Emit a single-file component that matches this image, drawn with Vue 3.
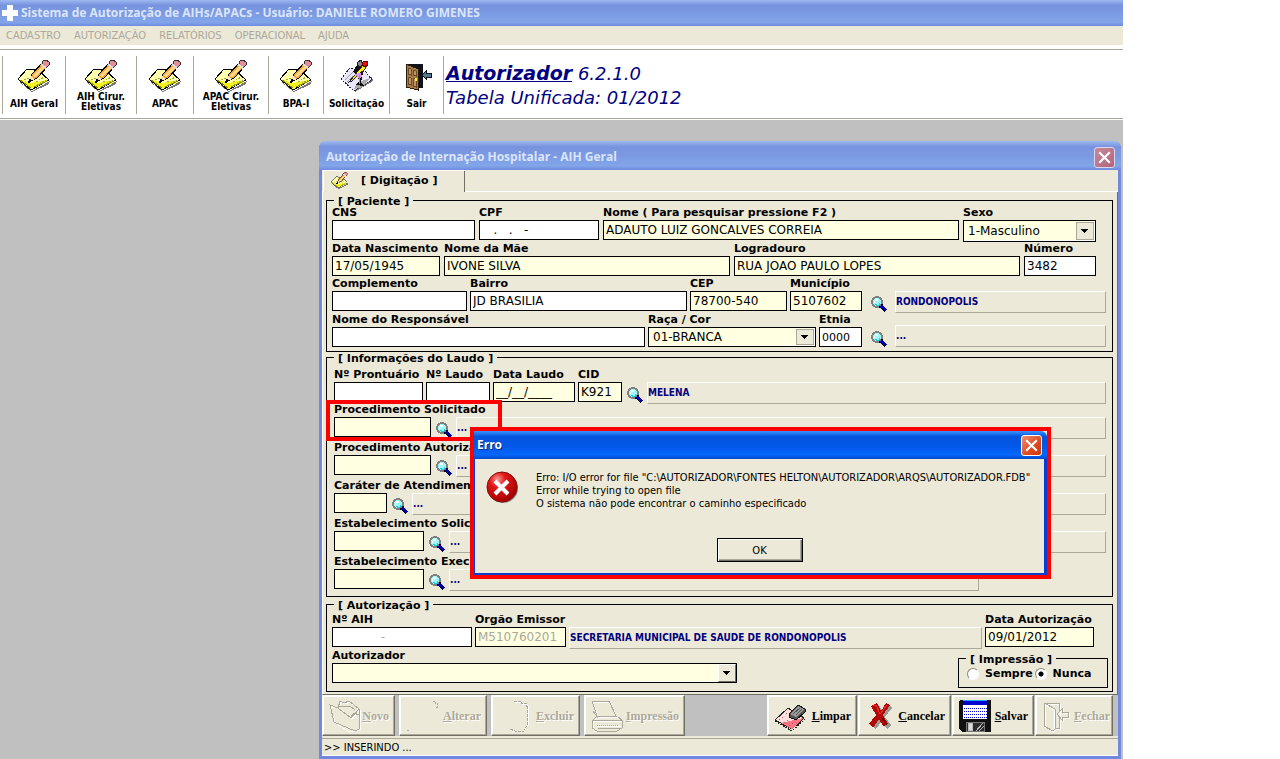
<script setup>
import { ref } from 'vue'

const menus = ['CADASTRO', 'AUTORIZAÇÃO', 'RELATÓRIOS', 'OPERACIONAL', 'AJUDA']
const tools = [
  { label: 'AIH Geral', icon: 'note', size: 'w63' },
  { label: 'AIH Cirur. Eletivas', icon: 'note', size: 'w71', two: true },
  { label: 'APAC', icon: 'note', size: 'w57' },
  { label: 'APAC Cirur. Eletivas', icon: 'note', size: 'w75', two: true },
  { label: 'BPA-I', icon: 'note', size: 'w55' },
  { label: 'Solicitação', icon: 'request', size: 'w66' },
  { label: 'Sair', icon: 'door', size: 'w54' }
]
const lookups = [
  { id: 'proc-sol', label: 'Procedimento Solicitado', size: 'code-l', marked: true },
  { id: 'proc-aut', label: 'Procedimento Autorizado', size: 'code-l' },
  { id: 'carater', label: 'Caráter de Atendimento', size: 'code-s' },
  { id: 'est-sol', label: 'Estabelecimento Solicitante', size: 'code-m' },
  { id: 'est-exe', label: 'Estabelecimento Executante', size: 'code-m', short: true }
]
const leftActions = [
  { key: 'N', rest: 'ovo', icon: 'folder', size: 'w73' },
  { key: 'A', rest: 'lterar', icon: 'edit', size: 'w88' },
  { key: 'E', rest: 'xcluir', icon: 'trash', size: 'w89' },
  { key: 'I', rest: 'mpressão', icon: 'printer', size: 'w101' }
]
const rightActions = [
  { key: 'L', rest: 'impar', icon: 'eraser', size: 'w90' },
  { key: 'C', rest: 'ancelar', icon: 'cancel', size: 'w93' },
  { key: 'S', rest: 'alvar', icon: 'disk', size: 'w82' },
  { key: 'F', rest: 'echar', icon: 'exit', size: 'w78', off: true }
]
const printMode = ref('nunca')
const cpf = '\u00a0\u00a0\u00a0.\u00a0\u00a0\u00a0.\u00a0\u00a0\u00a0-'
const aih = '\u00a0'.repeat(12) + '-'
</script>

<template>
  <div class="page">
    <svg class="defs" aria-hidden="true">
      <symbol id="note" viewBox="0 0 32 32">
        <g shape-rendering="crispEdges">
          <path d="M2 22 L14 31 L32 21 L31 24 L14 32 L1 22Z" fill="#777" />
          <path d="M0 19 L9 9 L20 10 L31 20 L13 30Z" fill="#ffffb0" stroke="#000" />
          <path d="M3 20 L13 23 L29 20 L29 22 L13 29Z" fill="#f2f21c" />
          <path d="M2 20 L13 28 M16 27 L29 21" stroke="#84840a" fill="none" />
          <path d="M6 20 L11 18 M18 22 L26 17 M19 25 L28 20" stroke="#a9a92e" fill="none" stroke-dasharray="2 1" />
          <path d="M11 22 L14 14 L25 2 L30 6 L19 18Z" fill="#f9a23a" stroke="#000" />
          <path d="M15 16 L25 5 L27 7 L17 18Z" fill="#ffd98a" />
          <path d="M25 1 L28 0 L31 2 L31 5 L28 8 L24 4Z" fill="#e58c96" stroke="#333" />
          <path d="M23 4 L28 8" stroke="#ddd" stroke-width="2" />
          <path d="M11 22 L13 16 L17 19Z" fill="#f7e3bd" />
          <path d="M10 23 L13 20" stroke="#000" stroke-width="2" />
        </g>
      </symbol>
      <symbol id="request" viewBox="0 0 32 32">
        <g shape-rendering="crispEdges">
          <path d="M3 21 L14 32 L32 21 L31 17Z" fill="#777" />
          <path d="M0 19 L9 8 L25 12 L31 20 L13 31Z" fill="#e8e8fa" stroke="#223" stroke-dasharray="2 1" />
          <path d="M16 23 L29 18 L22 27 L13 29Z" fill="#aaa" />
          <path d="M4 20 L12 12 M6 22 L14 15" stroke="#99a" />
          <path d="M15 6 L20 4 L22 13 L20 23 L23 26 L15 25 L18 21 L16 14 L12 12Z" fill="#111" />
          <path d="M8 22 L22 5 L25 8 L11 21Z" fill="#ffea20" stroke="#222" />
          <path d="M13 14 L20 13 L21 17 L18 18Z" fill="#d898dc" />
          <path d="M16 3 L20 0 L22 5 L18 7Z" fill="#888" stroke="#222" />
          <path d="M22 2 L26 1 L27 5 L24 7 L21 5Z" fill="#e31313" stroke="#600" />
          <path d="M18 15 V24" stroke="#999" />
        </g>
      </symbol>
      <symbol id="door" viewBox="0 0 32 32">
        <g shape-rendering="crispEdges">
          <path d="M5 4 H22 V28 H17 V9Z" fill="#10121c" />
          <path d="M5 4 L17 9 V30 L5 27Z" fill="#a57a48" stroke="#2c1c0c" />
          <path d="M7 8 L10 9 V15 L7 14Z M12 10 L15 11 V16 L12 15Z M7 17 L10 18 V25 L7 24Z M12 18 L15 19 V27 L12 26Z" fill="#bd9365" stroke="#6d4a25" />
          <path d="M14 18 h2 v3 h-2Z" fill="#ffea00" />
          <path d="M21 15 L25 11 V13 H30 V17 H25 V19Z" fill="#56788c" stroke="#10121c" />
        </g>
      </symbol>
      <symbol id="lens" viewBox="0 0 16 16">
        <g shape-rendering="crispEdges">
          <circle cx="6" cy="6" r="5" fill="#9ff6fb" stroke="#808080" stroke-width="2" />
          <path d="M4 3 h3 v2 h-3Z M3 5 h1 v2 h-1Z" fill="#fff" />
          <path d="M4 8 h2 v1 h2 v-2 h1 v2 h-1 v1 h-3Z" fill="#17cddd" />
          <path d="M8 11 L10 11 L11 8 L11 10Z" fill="#000" stroke="#000" />
          <path d="M10 10 L15 15" stroke="#0000a8" stroke-width="3" />
          <path d="M10 12 L14 16" stroke="#000" />
        </g>
      </symbol>
      <symbol id="folder" viewBox="0 0 32 32">
        <g fill="none" shape-rendering="crispEdges">
          <path d="M1 7 L9 6 L11 1 L15 3 L20 1 L30 9 V26 L30 29 L20 31 L5 22Z M9 7 L22 18 L30 9 M22 17 L25 12 L30 15" stroke="#fff" transform="translate(1 1)" />
          <path d="M1 5 L9 8 L11 1 L15 3 L20 1 L30 9 V29 L26 31 L5 22Z M9 8 L22 18 L30 9 M9 6 L21 6 L26 10 M22 17 L25 13 L30 15" stroke="#aca899" />
        </g>
      </symbol>
      <symbol id="edit" viewBox="0 0 32 32">
        <path d="M27 1 h2 v2 h2 v4 h-1 M1 30 h3" fill="none" stroke="#aca899" shape-rendering="crispEdges" stroke-dasharray="2 1" />
      </symbol>
      <symbol id="trash" viewBox="0 0 32 32">
        <g fill="none" shape-rendering="crispEdges">
          <path d="M17 2 h7 v2 h5 v5 M30 6 V25 L27 30 M12 30 L17 32 H26" stroke="#fff" />
          <path d="M16 1 h7 v2 h5 v4 M29 6 V25 L26 30 M12 29 L17 31 H26" stroke="#aca899" stroke-dasharray="3 1" />
        </g>
      </symbol>
      <symbol id="printer" viewBox="0 0 32 32">
        <g fill="none" shape-rendering="crispEdges">
          <path d="M1 1 H18 L25 16 H6Z M6 16 L1 21 V28 L6 31 H31 V20 L27 17 M1 20 H31 M5 25 H29 M2 11 L7 18" stroke="#fff" transform="translate(1 1)" />
          <path d="M1 1 H18 L25 16 H6Z M6 16 L1 21 V28 L6 31 H26 L31 28 V20 L27 17 M1 20 H31 M2 11 L7 18 M7 28 H30" stroke="#aca899" />
          <path d="M6 25 H28" stroke="#aca899" stroke-dasharray="1 1" />
        </g>
      </symbol>
      <symbol id="eraser" viewBox="0 0 32 32">
        <g shape-rendering="crispEdges">
          <path d="M1 20 L14 8 L30 18 L18 29Z" fill="#ffdede" stroke="#222" />
          <path d="M7 23 L29 18 L18 29Z" fill="#ff7480" />
          <path d="M1 21 L18 31 L31 19" stroke="#222" stroke-dasharray="2 1" fill="none" />
          <path d="M8 17 L19 24 M12 13 L22 20 M5 19 L16 26" stroke="#965" stroke-dasharray="1 2" />
          <path d="M15 14 L24 5 L31 9 V12 L22 20 L15 17Z" fill="#555" stroke="#111" />
          <path d="M16 14 L24 6 L30 9 L22 17Z" fill="#999" />
          <path d="M19 14 L26 8 M22 15 L28 9" stroke="#555" />
        </g>
      </symbol>
      <symbol id="cancel" viewBox="0 0 32 32">
        <g shape-rendering="crispEdges">
          <path d="M9 8 L14 5 L18 12 L24 5 L27 8 L20 17 L26 25 L22 29 L17 21 L11 29 L7 26 L14 17Z" fill="#9b9a94" />
          <path d="M6 6 L12 3 L16 11 L21 3 L25 5 L18 15 L23 24 L18 26 L14 19 L8 28 L4 24 L11 15Z" fill="#b20808" />
          <path d="M8 6 L11 5 L15 14 L22 5" stroke="#e83030" fill="none" />
          <path d="M16 17 L22 24 L18 26" stroke="#600000" fill="none" />
        </g>
      </symbol>
      <symbol id="disk" viewBox="0 0 32 32">
        <g shape-rendering="crispEdges">
          <path d="M1 0 H31 L32 1 V32 H3 L0 29 V1Z" fill="#111" />
          <path d="M4 1 H28 V19 H4Z" fill="#fff" />
          <path d="M4 1 H28 V5 H4Z" fill="#0000d0" />
          <path d="M4 0 H28 V1 H4Z" fill="#26a6ea" />
          <path d="M5 8 H28 M5 11 H28 M5 14 H28 M5 17 H28" stroke="#0000c8" stroke-dasharray="1 1" />
          <path d="M7 22 H25 V31 H7Z" fill="#2c2c2c" stroke="#777" />
          <path d="M9 23 H13 V30 H9Z M17 31 L24 23 M20 31 L25 26" fill="#ddd" stroke="#bbb" />
        </g>
      </symbol>
      <symbol id="exit" viewBox="0 0 32 32">
        <g fill="none" shape-rendering="crispEdges">
          <path d="M2 3 H17 V28 H13 M2 3 V26 L11 31 V9 L3 4 M15 14 L20 9 V12 H26 V17 H20 V20Z" stroke="#fff" transform="translate(1 1)" />
          <path d="M2 3 H17 V11 M17 18 V28 H13 M2 3 V26 L11 31 L13 29 V9 L4 4 M15 14 L20 9 V12 H26 V17 H20 V20Z" stroke="#aca899" />
        </g>
      </symbol>
      <symbol id="cross" viewBox="0 0 16 16">
        <path d="M3 3 L13 13 M13 3 L3 13" stroke="#fff" stroke-width="2" fill="none" />
      </symbol>
      <symbol id="arrow" viewBox="0 0 8 4">
        <path d="M0 0 H7 L4 4 H3Z" fill="#000" shape-rendering="crispEdges" />
      </symbol>
    </svg>

    <div class="app">
      <header class="titlebar main-title">
        <svg class="plus" viewBox="0 0 16 16"><path d="M5 0 h6 v5 h5 v6 h-5 v5 h-6 v-5 h-5 v-6 h5Z" fill="#fff" /></svg>
        <h1>Sistema de Autorização de AIHs/APACs - Usuário: DANIELE ROMERO GIMENES</h1>
      </header>

      <nav class="menubar">
        <button v-for="m in menus" :key="m" type="button" disabled>{{ m }}</button>
      </nav>

      <div class="toolbar">
        <button v-for="t in tools" :key="t.label" type="button" class="tool" :class="[t.size, { two: t.two }]">
          <svg><use :href="'#' + t.icon" /></svg>
          <span>{{ t.label }}</span>
        </button>
        <div class="brand">
          <p><strong>Autorizador</strong> <em>6.2.1.0</em></p>
          <p class="table-version">Tabela Unificada: 01/2012</p>
        </div>
      </div>

      <main class="desktop">
        <section class="window">
          <header class="titlebar win-title">
            <h2>Autorização de Internação Hospitalar - AIH Geral</h2>
            <button type="button" class="close faded" aria-label="Fechar janela"><svg><use href="#cross" /></svg></button>
          </header>

          <div class="tabs">
            <button type="button" class="tab"><svg><use href="#note" /></svg><span>[ Digitação ]</span></button>
          </div>

          <form class="sheet" @submit.prevent>
            <fieldset class="group patient">
              <legend>[ Paciente ]</legend>
              <div class="row wide-gap">
                <div class="field w143"><label for="cns">CNS</label><input id="cns" type="text"></div>
                <div class="field w120"><label for="cpf">CPF</label><input id="cpf" type="text" :value="cpf"></div>
                <div class="field grow"><label for="nome">Nome ( Para pesquisar pressione F2 )</label><input id="nome" class="req" type="text" value="ADAUTO LUIZ GONCALVES CORREIA"></div>
                <div class="field w133"><label for="sexo">Sexo</label>
                  <div class="combo"><select id="sexo"><option>1-Masculino</option></select><span class="drop"><svg><use href="#arrow" /></svg></span></div>
                </div>
              </div>
              <div class="row wide-gap">
                <div class="field w108"><label for="nasc">Data Nascimento</label><input id="nasc" class="req" type="text" value="17/05/1945"></div>
                <div class="field grow"><label for="mae">Nome da Mãe</label><input id="mae" class="req" type="text" value="IVONE SILVA"></div>
                <div class="field grow"><label for="logr">Logradouro</label><input id="logr" class="req" type="text" value="RUA JOAO PAULO LOPES"></div>
                <div class="field w72"><label for="num">Número</label><input id="num" type="text" value="3482"></div>
              </div>
              <div class="row">
                <div class="field w135"><label for="compl">Complemento</label><input id="compl" type="text"></div>
                <div class="field w217"><label for="bairro">Bairro</label><input id="bairro" type="text" value="JD BRASILIA"></div>
                <div class="field w97"><label for="cep">CEP</label><input id="cep" class="req" type="text" value="78700-540"></div>
                <div class="field w72"><label for="mun">Município</label><input id="mun" class="req" type="text" value="5107602"></div>
                <button type="button" class="find far" aria-label="Buscar município"><svg><use href="#lens" /></svg></button>
                <output class="panel">RONDONOPOLIS</output>
              </div>
              <div class="row end">
                <div class="field w313"><label for="resp">Nome do Responsável</label><input id="resp" type="text"></div>
                <div class="field w168"><label for="raca">Raça / Cor</label>
                  <div class="combo"><select id="raca"><option>01-BRANCA</option></select><span class="drop"><svg><use href="#arrow" /></svg></span></div>
                </div>
                <div class="field w43"><label for="etnia">Etnia</label><input id="etnia" class="small" type="text" value="0000"></div>
                <button type="button" class="find far" aria-label="Buscar etnia"><svg><use href="#lens" /></svg></button>
                <output class="panel">...</output>
              </div>
            </fieldset>

            <fieldset class="group report">
              <legend>[ Informações do Laudo ]</legend>
              <div class="row first">
                <div class="field w89"><label for="pront">Nº Prontuário</label><input id="pront" type="text"></div>
                <div class="field w64"><label for="laudo">Nº Laudo</label><input id="laudo" type="text"></div>
                <div class="field w82"><label for="dlaudo">Data Laudo</label><input id="dlaudo" class="req" type="text" value="__/__/____"></div>
                <div class="field w44"><label for="cid">CID</label><input id="cid" class="req" type="text" value="K921"></div>
                <button type="button" class="find" aria-label="Buscar CID"><svg><use href="#lens" /></svg></button>
                <output class="panel">MELENA</output>
              </div>
              <div v-for="l in lookups" :key="l.id" class="row lookup" :class="{ marked: l.marked, short: l.short }">
                <div class="field" :class="l.size"><label :for="l.id">{{ l.label }}</label><input :id="l.id" class="req" type="text"></div>
                <button type="button" class="find" :aria-label="'Buscar ' + l.label"><svg><use href="#lens" /></svg></button>
                <output class="panel">...</output>
              </div>
            </fieldset>

            <fieldset class="group authorization">
              <legend>[ Autorização ]</legend>
              <div class="row issue">
                <div class="field w140"><label for="naih">Nº AIH</label><input id="naih" type="text" disabled :value="aih"></div>
                <div class="field w91"><label for="orgao">Orgão Emissor</label><input id="orgao" class="req" type="text" disabled value="M510760201"></div>
                <output class="panel">SECRETARIA MUNICIPAL DE SAUDE DE RONDONOPOLIS</output>
                <div class="field w109"><label for="daut">Data Autorização</label><input id="daut" class="req" type="text" value="09/01/2012"></div>
              </div>
              <div class="row signer">
                <div class="field w405"><label for="aut">Autorizador</label>
                  <div class="combo raised"><select id="aut"><option></option></select><span class="drop"><svg><use href="#arrow" /></svg></span></div>
                </div>
                <fieldset class="group print">
                  <legend>[ Impressão ]</legend>
                  <div class="radios">
                    <label><input v-model="printMode" type="radio" name="impressao" value="sempre">Sempre</label>
                    <label><input v-model="printMode" type="radio" name="impressao" value="nunca">Nunca</label>
                  </div>
                </fieldset>
              </div>
            </fieldset>
          </form>

          <div class="actions">
            <button v-for="a in leftActions" :key="a.key" type="button" disabled :class="a.size"><svg><use :href="'#' + a.icon" /></svg><span><u>{{ a.key }}</u>{{ a.rest }}</span></button>
            <div class="actions-right">
              <button v-for="a in rightActions" :key="a.key" type="button" :disabled="a.off" :class="a.size"><svg><use :href="'#' + a.icon" /></svg><span><u>{{ a.key }}</u>{{ a.rest }}</span></button>
            </div>
          </div>
          <footer class="status">&gt;&gt; INSERINDO ...</footer>

          <div class="dialog" role="alertdialog" aria-labelledby="err-title" aria-describedby="err-text">
            <header class="err-title">
              <h3 id="err-title">Erro</h3>
              <button type="button" class="close" aria-label="Fechar erro"><svg><use href="#cross" /></svg></button>
            </header>
            <div class="err-body">
              <div class="message">
                <svg class="err-icon" viewBox="0 0 34 34">
                  <defs><radialGradient id="ball" cx="35%" cy="25%" r="75%"><stop offset="0" stop-color="#f99" /><stop offset=".35" stop-color="#e01818" /><stop offset="1" stop-color="#a80000" /></radialGradient></defs>
                  <circle cx="17" cy="17" r="15" fill="#777" />
                  <circle cx="16" cy="16" r="15" fill="url(#ball)" stroke="#8c0a0a" />
                  <path d="M9 10 L22 23 M22 10 L9 23" stroke="#fff" stroke-width="4" />
                </svg>
                <p id="err-text">Erro: I/O error for file "C:\AUTORIZADOR\FONTES HELTON\AUTORIZADOR\ARQS\AUTORIZADOR.FDB"<br>Error while trying to open file<br>O sistema não pode encontrar o caminho especificado</p>
              </div>
              <button type="button" class="ok">OK</button>
            </div>
          </div>
        </section>
      </main>
    </div>
  </div>
</template>

<style>
html, body { margin: 0; background: #fff; }
</style>

<style scoped>
* { box-sizing: border-box; }
h1, h2, h3, p { margin: 0; }
button { padding: 0; border: 0; background: none; color: #000; font: inherit; }
svg { display: block; flex: none; }
.defs { position: absolute; width: 0; height: 0; }

.page { min-height: 100vh; padding-right: 157px; font: 11px/13px "DejaVu Sans Condensed", "DejaVu Sans", sans-serif; color: #000; }
.app { display: flex; flex-direction: column; min-height: 100vh; }

.titlebar { display: flex; align-items: center; background: linear-gradient(#9db9f0 0, #7893de 20%, #7c9be3 55%, #82a6ea 85%, #6f8ade 100%); color: #dbe5fa; }
.titlebar h1, .titlebar h2 { font: bold 12px/16px "Open Sans", sans-serif; white-space: nowrap; }
.main-title { height: 26px; padding-left: 2px; gap: 3px; }
.plus { width: 16px; height: 16px; }
.menubar { display: flex; gap: 13px; height: 19px; padding-left: 6px; background: #ece9d8; }
.menubar button { color: #aca899; }

.toolbar { display: flex; height: 74px; padding: 11px 0 4px 2px; border-bottom: 1px solid #aca899; background: linear-gradient(#aca899, #aca899) 0 4px / 100% 1px no-repeat #fff; }
.tool { display: flex; flex-direction: column; align-items: center; height: 58px; padding-top: 4px; border-left: 1px solid #aca899; font-size: 10px; line-height: 10px; font-weight: bold; }
.tool svg { width: 32px; height: 32px; }
.tool span { margin-top: 7px; white-space: nowrap; }
.tool.two span { width: 60px; margin-top: 0; white-space: normal; }
.brand { height: 58px; padding: 4px 0 0 2px; border-left: 1px solid #aca899; color: #000080; font-family: "DejaVu Sans", sans-serif; font-style: italic; white-space: nowrap; }
.brand p { font-size: 18px; line-height: 26px; }
.brand strong { font-size: 19px; text-decoration: underline; }
.brand .table-version { line-height: 22px; }

.desktop { flex: 1; margin-top: 1px; padding: 21px 2px 0 319px; background: #c0c0c0; }
.window { position: relative; border: solid #7288de; border-width: 0 3px 3px; border-radius: 7px 7px 0 0; background: #ece9d8; }
.win-title { height: 29px; margin: 0 -3px; padding: 3px 6px 0 7px; justify-content: space-between; border-radius: 7px 7px 0 0; }
.close { width: 21px; height: 21px; display: grid; place-items: center; border: 1px solid #fff; border-radius: 3px; background: linear-gradient(135deg, #f09070, #dd4a20 60%, #c83808); }
.close svg { width: 17px; height: 17px; }
.close.faded { border-color: #dcd5ec; background: linear-gradient(135deg, #c58a9c, #b0667c); }

.tabs { display: flex; height: 22px; padding-left: 1px; border-bottom: 1px solid #fff; }
.tab { display: flex; align-items: center; gap: 13px; width: 142px; height: 22px; padding: 0 0 2px 7px; border: solid #fff; border-width: 1px 0 0 1px; box-shadow: inset -1px 0 #716f64; background: #ece9d8; font: bold 11px/14px "DejaVu Sans", sans-serif; }
.tab svg { width: 17px; height: 17px; }

.sheet { padding: 3px 4px 2px 3px; border-left: 1px solid #fff; border-right: 1px solid #716f64; border-bottom: 1px solid #716f64; }
.group { min-width: 0; margin: 0; padding: 0; border: 1px solid #000; }
.group legend { height: 10px; margin-left: 7px; padding: 0 4px; font: bold 11px/14px "DejaVu Sans", sans-serif; }
.patient { padding: 1px 0 4px; }
.report { padding: 6px 0 3px; }
.authorization { margin-top: 2px; padding: 4px 0 3px; }

.row { display: flex; align-items: flex-start; gap: 3px; min-height: 35px; padding: 0 6px 0 5px; }
.wide-gap { gap: 4px; padding-right: 16px; }
.report .row { padding-left: 7px; }
.first { height: 35px; }
.lookup { position: relative; height: 38px; }
.report .short { padding-right: 133px; }
.marked::after { content: ""; box-sizing: border-box; position: absolute; left: -1px; top: -3px; width: 176px; height: 41px; border: 4px solid #f00; }
.issue { padding-right: 18px; }
.signer { justify-content: space-between; height: 39px; padding-right: 4px; }
.field { flex: none; }
.field.grow { flex: 1 1 0; min-width: 0; }
.field label { display: block; height: 14px; font: bold 11px/14px "DejaVu Sans", sans-serif; white-space: nowrap; }
.field input { display: block; width: 100%; height: 20px; padding: 0 2px; border: 1px solid #000; border-radius: 0; outline: 0; background: #fff; color: #000; font: 12px/16px "DejaVu Sans", sans-serif; }
.field input:disabled { color: #aca899; }
.field input.req { background: #ffffe1; }
.field input.small { font-size: 11px; }
.combo { position: relative; }
.combo select { display: block; width: 100%; height: 22px; padding: 0 20px 0 4px; appearance: none; border: 1px solid #000; border-radius: 0; box-shadow: inset -1px -1px #fff; background: #ffffe1; color: #000; font: 12px/16px "DejaVu Sans", sans-serif; }
.end .combo select, .raised select { height: 20px; }
.drop { position: absolute; top: 2px; right: 2px; bottom: 2px; width: 18px; display: grid; place-items: center; border: 1px solid #aca899; background: #ece9d8; pointer-events: none; }
.drop svg { width: 8px; height: 4px; }
.raised .drop { top: 1px; right: 1px; bottom: 1px; border-color: #fff #716f64 #716f64 #fff; }
.find { flex: none; width: 19px; height: 16px; margin-top: 19px; display: grid; place-items: center; }
.find.far { width: 27px; }
.find svg { width: 16px; height: 16px; }
.panel { flex: 1 1 0; min-width: 0; height: 22px; margin-top: 14px; border: 1px solid; border-color: #fff #aca899 #aca899 #fff; color: #000080; font: bold 10px/20px "DejaVu Sans Condensed", "DejaVu Sans", sans-serif; white-space: nowrap; overflow: hidden; }
.end { align-items: flex-end; height: 34px; min-height: 34px; }
.end .panel { margin-top: 0; }

.print { width: 150px; align-self: flex-end; }
.radios { display: flex; gap: 2px; height: 24px; padding: 4px 0 0 8px; font: bold 11px/14px "DejaVu Sans", sans-serif; }
.radios label { display: flex; gap: 6px; align-items: center; height: 14px; }
.radios input { appearance: none; width: 12px; height: 12px; margin: 0; border: 1px solid; border-color: #8d8a7c #fff #fff #8d8a7c; border-radius: 50%; background: #fff; }
.radios input:checked { background: radial-gradient(circle, #000 2px, #fff 3px); }

.actions { display: flex; gap: 4px; height: 41px; background: #c0c0c0; }
.actions-right { display: flex; gap: 1px; margin-left: auto; padding-right: 5px; }
.actions button { display: flex; align-items: center; justify-content: space-between; padding: 0 5px 0 6px; border: 1px solid; border-color: #fff #716f64 #716f64 #fff; box-shadow: inset -1px -1px #aca899, inset 1px 1px #fff; background: #ece9d8; font: bold 12px/14px "Liberation Serif", serif; }
.actions button:disabled { color: #aca899; text-shadow: 1px 1px #fff; }
.actions svg { width: 32px; height: 32px; }
.status { height: 18px; margin-top: 2px; padding: 2px; border-top: 1px solid #aca899; border-bottom: 1px solid #fff; line-height: 14px; }

.w43 { width: 43px; } .w44 { width: 44px; } .w54 { width: 54px; } .w55 { width: 55px; } .w57 { width: 57px; }
.w63 { width: 63px; } .w64 { width: 64px; } .w66 { width: 66px; } .w71 { width: 71px; } .w72 { width: 72px; }
.w73 { width: 73px; } .w75 { width: 75px; } .w78 { width: 78px; } .w82 { width: 82px; } .w88 { width: 88px; }
.w89 { width: 89px; } .w90 { width: 90px; } .w91 { width: 91px; } .w93 { width: 93px; } .w97 { width: 97px; }
.w101 { width: 101px; } .w108 { width: 108px; } .w109 { width: 109px; } .w120 { width: 120px; } .w133 { width: 133px; }
.w135 { width: 135px; } .w140 { width: 140px; } .w143 { width: 143px; } .w168 { width: 168px; } .w217 { width: 217px; }
.w313 { width: 313px; } .w405 { width: 405px; }
.code-s { width: 53px; } .code-m { width: 90px; } .code-l { width: 97px; }

.dialog { position: absolute; top: 286px; left: 148px; right: 67px; border: 4px solid #f00; background: #ece9d8; }
.err-title { display: flex; align-items: center; justify-content: space-between; height: 28px; padding: 0 5px 0 3px; border-radius: 0 6px 0 0; background: linear-gradient(#3a94ff 0, #0454dc 20%, #0359ec 60%, #0468fc 85%, #0348c8 100%); }
.err-title h3 { color: #fff; font: bold 12px/16px "Open Sans", sans-serif; text-shadow: 1px 1px #0a2c80; }
.err-body { display: flex; flex-direction: column; align-items: center; gap: 22px; padding: 12px 9px 11px; border: solid #0a3cd0; border-width: 0 3px 2px 1px; }
.message { display: flex; gap: 16px; align-self: stretch; padding-left: 2px; }
.message p { white-space: nowrap; }
.err-icon { width: 34px; height: 34px; }
.ok { width: 86px; height: 24px; margin-top: 6px; border: 1px solid #000; box-shadow: inset 1px 1px #fff, inset -1px -1px #716f64, inset -2px -2px #aca899; background: #ece9d8; }
</style>
